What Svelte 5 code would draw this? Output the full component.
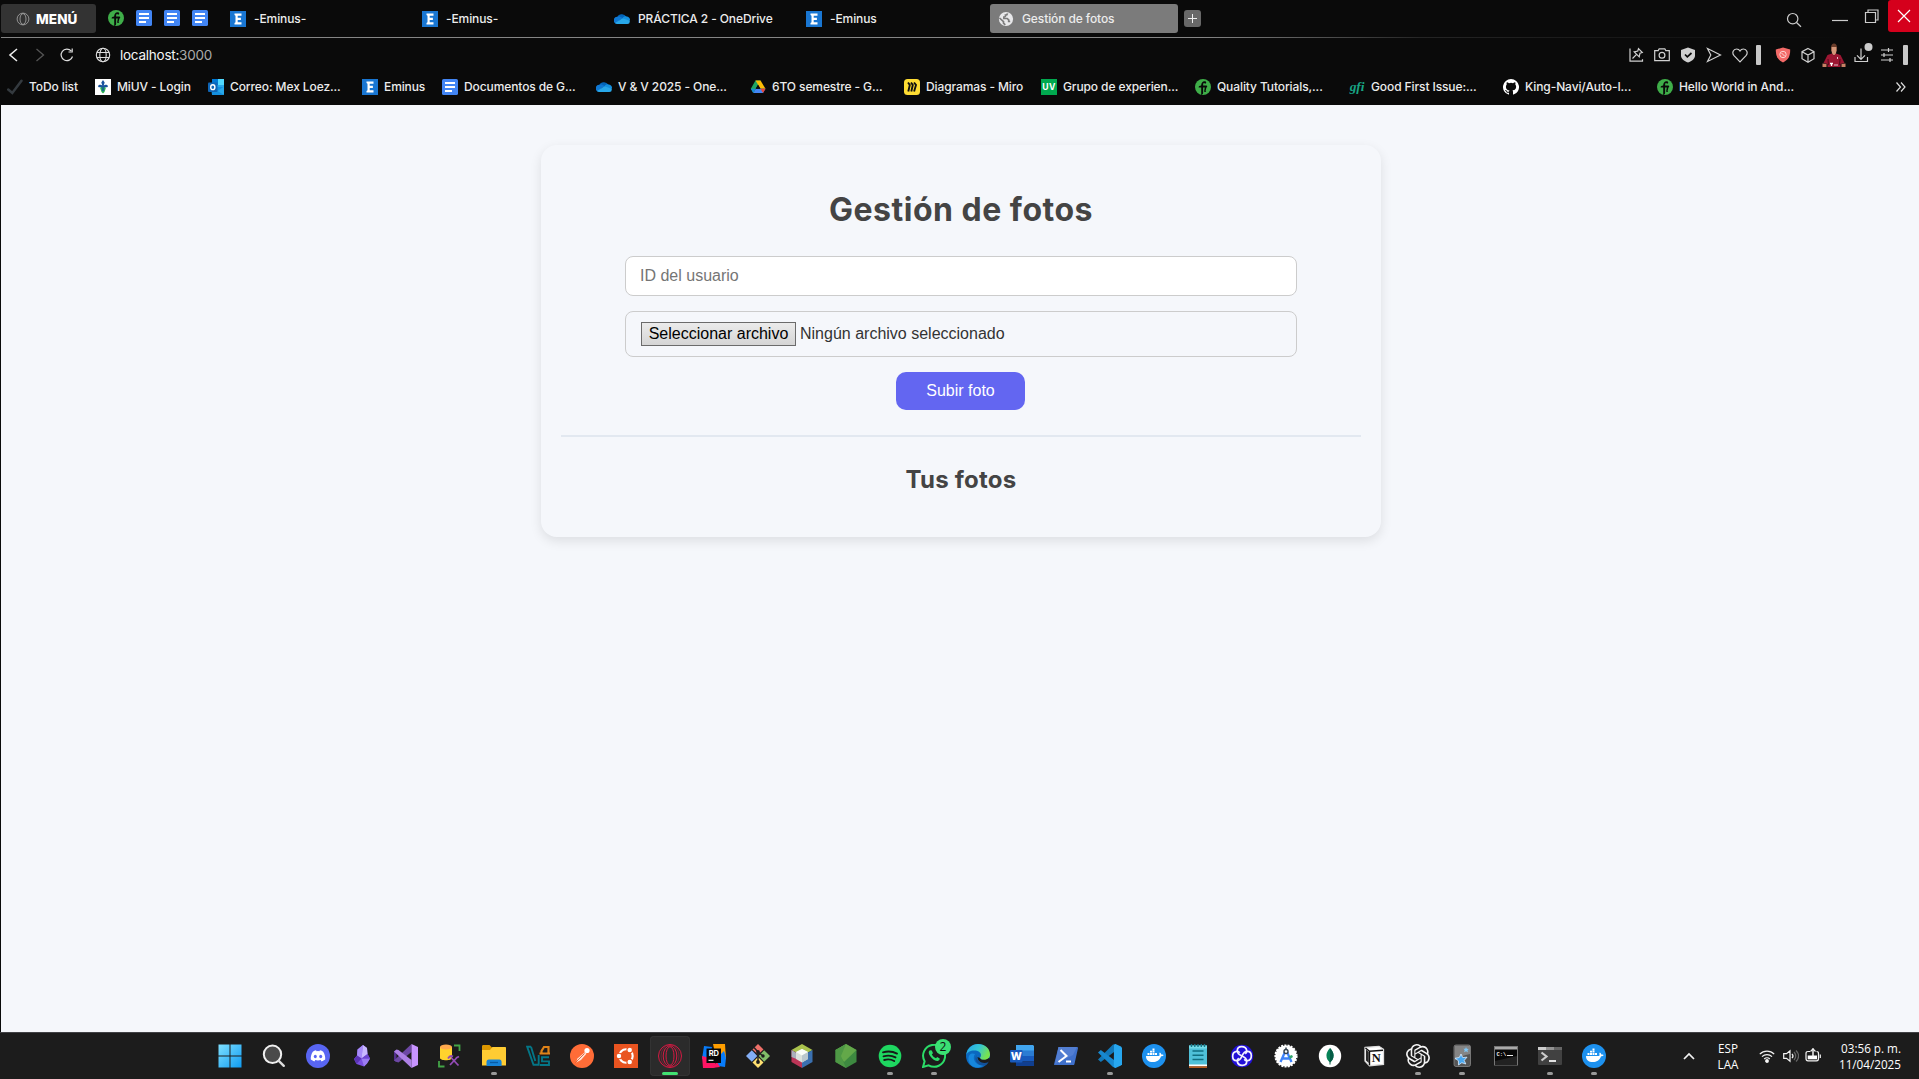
<script>
  const pinned = ['quality', 'docs', 'docs', 'docs'];
  const tabs = [
    { icon: 'eminus', title: '-Eminus-' },
    { icon: 'eminus', title: '-Eminus-' },
    { icon: 'onedrive', title: 'PRÁCTICA 2 - OneDrive' },
    { icon: 'eminus', title: '-Eminus' }
  ];
  const bookmarks = [
    { icon: 'check', title: 'ToDo list', width: 88 },
    { icon: 'miuv', title: 'MiUV - Login', width: 113 },
    { icon: 'outlook', title: 'Correo: Mex Loez...', width: 154 },
    { icon: 'eminus', title: 'Eminus', width: 80 },
    { icon: 'docs', title: 'Documentos de G...', width: 154 },
    { icon: 'onedrive', title: 'V & V 2025 - One...', width: 154 },
    { icon: 'drive', title: '6TO semestre - G...', width: 154 },
    { icon: 'miro', title: 'Diagramas - Miro', width: 137 },
    { icon: 'uv', title: 'Grupo de experien...', width: 154 },
    { icon: 'quality', title: 'Quality Tutorials,...', width: 154 },
    { icon: 'gfi', title: 'Good First Issue:...', width: 154 },
    { icon: 'github', title: 'King-Navi/Auto-I...', width: 154 },
    { icon: 'quality', title: 'Hello World in And...', width: 154 }
  ];
  const apps = [
    { icon: 'windows' }, { icon: 'search' }, { icon: 'discord' }, { icon: 'obsidian' },
    { icon: 'vs' }, { icon: 'dbtool' }, { icon: 'explorer', open: true }, { icon: 'virtualbox' },
    { icon: 'postman' }, { icon: 'ubuntu' }, { icon: 'opera', active: true }, { icon: 'rider' },
    { icon: 'git' }, { icon: 'netbeans' }, { icon: 'node' }, { icon: 'spotify', open: true },
    { icon: 'whatsapp', open: true, badge: '2' }, { icon: 'edge' }, { icon: 'word' },
    { icon: 'powershell' }, { icon: 'vscode', open: true }, { icon: 'docker' },
    { icon: 'notepad' }, { icon: 'swirl' }, { icon: 'android' }, { icon: 'mongo' },
    { icon: 'notion' }, { icon: 'openai', open: true }, { icon: 'anki', open: true },
    { icon: 'cmd' }, { icon: 'terminal', open: true }, { icon: 'docker', open: true }
  ];
</script>

{#snippet favicon(name)}
  <svg class="fav" viewBox="0 0 16 16">
    {#if name === 'quality'}
      <circle cx="8" cy="8" r="8" fill="#3fae49" />
      <path d="M6.200 16V8.500H3.600c.1-1.200 1-1.900 2.500-1.900C6.300 3.900 7.400 2.300 9.500 2.300c1 0 1.700.5 1.700 1.300 0 .7-.4 1.100-1 1.100-.7 0-.8-.6-1.300-.6-.6 0-.8 1-.8 2.500h2.700c.9 0 1.400.4 1.400 1 0 .5-.3.900-.8.900l-.8 3.500c-.1.400.1.500.6.400-.4.800-2.200 1-2-.5l.6-3.400H8.100V14c0 1-.7 1.800-1.900 2z" fill="#0a0a0a" />
    {:else if name === 'docs'}
      <rect width="16" height="16" rx="1.600" fill="#4285f4" />
      <path d="M3 4h10M3 8h10M3 12h7" stroke="#fff" stroke-width="1.800" />
    {:else if name === 'eminus'}
      <rect width="16" height="16" fill="#1976d2" />
      <path d="M4.500 2.500h7v2.200H7.700v2.100h3.200v2.300H7.700v2.200h3.800v2.200h-7v-1.600l1-.6V4.700l-1-.6z" fill="#fff" />
    {:else if name === 'onedrive'}
      <path d="M3 7.500A5 5 0 0 1 12.300 5.800L9 9z" fill="#0364b8" />
      <path d="M3.300 5.800c2-.7 3.800.2 5.200 1.200L2 12.600A3.500 3.500 0 0 1 3.300 5.800z" fill="#0f78d4" />
      <path d="M8.500 7c1-1.300 2.600-2 4-1.600A3.600 3.600 0 0 1 16 9.500L12 11z" fill="#1490df" />
      <path d="M1 12 8.500 7.200l7.200 2.600a2.800 2.800 0 0 1-2.300 3.300H3A3 3 0 0 1 1 12z" fill="#28a8ea" />
    {:else if name === 'check'}
      <path d="M1.200 10.500 5.300 14 14.500 1.800" fill="none" stroke="#343a3f" stroke-width="2.500" stroke-linecap="round" />
    {:else if name === 'miuv'}
      <rect width="16" height="16" fill="#fff" />
      <path d="M8 1 9.700 3.500 8.700 6.500c1-1.300 4.300-1 4.200.7-.1 1.200-1.600 1.500-2.100.7L9.500 9h-3L5.200 7.900c-.5.800-2 .5-2.100-.7C3 5.500 6.300 5.200 7.300 6.500l-1-3z" fill="#18529d" />
      <path d="M5 8.500h6L9.500 13 8 14.500 6.500 13z" fill="#28ad56" /><path d="M7.200 8.500h1.600V12H7.200z" fill="#18529d" />
    {:else if name === 'outlook'}
      <rect x="4" y="0" width="12" height="14" rx="1" fill="#28a8ea" />
      <path d="M4 0h6v6H4z" fill="#0078d4" /><path d="M10 0h6v6h-6z" fill="#50d9ff" />
      <path d="M3 8h13v7a1 1 0 0 1-1 1H4z" fill="#1490df" /><path d="m3 8 13 8V7.500L9.500 12z" fill="#28a8ea" />
      <rect x="0" y="3.500" width="9.500" height="9.500" rx="1" fill="#0f65b5" />
      <ellipse cx="4.800" cy="8.200" rx="2.100" ry="2.400" fill="none" stroke="#fff" stroke-width="1.400" />
    {:else if name === 'drive'}
      <path d="M5.500 1.500h5L8 6 3.300 14 .8 9.800z" fill="#1fa463" />
      <path d="M5.500 1.500h5l5 8.300h-5z" fill="#fbbc04" />
      <path d="M3.300 14 5.700 9.800h9.800L13 14z" fill="#4285f4" />
      <path d="M10.500 9.800h5L13 14z" fill="#ea4335" /><path d="m.8 9.800 2.500 4.200 2.400-4.200z" fill="#188ad6" />
      <path d="m8 5.800 2.300 4H5.700z" fill="#0a0a0a" />
    {:else if name === 'miro'}
      <rect width="16" height="16" rx="3.500" fill="#ffdd33" />
      <path d="M4 3.500 5.800 6 4.300 12.500M7 3.500 8.800 6 7.300 12.500M10 3.500 12 6l-1.900 6.500" fill="none" stroke="#111" stroke-width="1.900" />
    {:else if name === 'uv'}
      <rect width="16" height="16" fill="#00a94f" />
      <text x="8" y="10.600" text-anchor="middle" font-size="8.600" font-weight="700" letter-spacing=".3" fill="#fff">UV</text>
    {:else if name === 'gfi'}
      <text class="serif" x="8" y="12" text-anchor="middle" font-size="13.500" font-weight="700" font-style="italic" fill="#18a383">gfi</text>
    {:else if name === 'github'}
      <path d="M8 0a8 8 0 0 0-2.530 15.590c.4.070.55-.17.55-.38l-.01-1.490c-2.010.37-2.530-.49-2.690-.94-.09-.23-.48-.94-.82-1.130-.28-.15-.68-.52-.01-.53.63-.01 1.080.58 1.230.82.720 1.210 1.870.87 2.330.66.070-.52.280-.87.510-1.070-1.780-.2-3.640-.89-3.640-3.950 0-.87.310-1.590.82-2.150-.08-.2-.36-1.020.08-2.120 0 0 .67-.21 2.200.82a7.600 7.600 0 0 1 4 0c1.530-1.040 2.200-.82 2.200-.82.440 1.100.160 1.920.08 2.120.510.560.82 1.270.82 2.150 0 3.070-1.870 3.750-3.650 3.950.290.250.54.73.54 1.480l-.01 2.200c0 .21.150.46.55.38A8 8 0 0 0 8 0z" fill="#fff" />
    {/if}
  </svg>
{/snippet}

{#snippet app(name)}
  <svg class="appicon" viewBox="0 0 24 24">
    {#if name === 'windows'}
      <defs><linearGradient id="win" x1="0" y1="0" x2="1" y2="1"><stop stop-color="#7fe0ff" /><stop offset="1" stop-color="#0f9bf2" /></linearGradient></defs>
      <path d="M.5.5h11v11H.5zM12.500.5h11v11h-11zM.5 12.500h11v11H.5zM12.500 12.500h11v11h-11z" fill="url(#win)" />
    {:else if name === 'search'}
      <circle cx="10.500" cy="10.300" r="8.700" fill="#4a4a4a" stroke="#f0f0f0" stroke-width="2" />
      <path d="m16.800 16.800 5 5" stroke="#ddd" stroke-width="2.400" stroke-linecap="round" />
    {:else if name === 'discord'}
      <circle cx="12" cy="12" r="12" fill="#5865f2" />
      <path d="M6.800 7.700c1-.8 2-1.200 3.200-1.400l.6.900a12 12 0 0 1 2.800 0l.6-.9c1.200.2 2.300.6 3.200 1.400 1.500 2.400 2.200 5 2 7.900a9 9 0 0 1-3.600 1.800l-.9-1.400c-1.800.5-3.600.5-5.400 0l-.9 1.400a9 9 0 0 1-3.600-1.800c-.2-2.900.5-5.500 2-7.900z" fill="#fff" />
      <ellipse cx="9.300" cy="12.500" rx="1.500" ry="1.700" fill="#5865f2" /><ellipse cx="14.700" cy="12.500" rx="1.500" ry="1.700" fill="#5865f2" />
    {:else if name === 'obsidian'}
      <path d="m13 1-5.500 4.500-.5 6L4 15l2.500 5 7.500 2.500 3-3 3-5-2.500-4.500L17 4z" fill="#7a4fe0" />
      <path d="M13 1 7.500 5.500 7 11.500l4.500 3z" fill="#a78bfa" /><path d="m13 1 4 3 .5 6-6 4.500z" fill="#c9b8ff" />
      <path d="m11.500 14.500 8.500 0-3 5-3 3z" fill="#9b7cf2" /><path d="m7 11.500-3 3.500 2.500 5 5-5.500z" fill="#5b34b5" /><path d="m17.500 10 2.500 4.500h-8.500z" fill="#6d45cf" />
    {:else if name === 'vs'}
      <path d="M0 7.500 2.500 6v12L0 16.500z" fill="#52308c" />
      <path d="M17.500 0v8L4.500 18.500 2 17.800 0 16.500z" fill="#6d48a5" />
      <path d="m2.500 5.500 2 .5 13 10v8L0 7.500z" fill="#ad80e5" />
      <path d="m17.500 0 6.500 3v18l-6.500 3z" fill="#c894ff" />
    {:else if name === 'dbtool'}
      <path d="M2 3v11c0 3 12 3 12 0V3z" fill="#ffd32d" /><ellipse cx="8" cy="3" rx="6" ry="2.500" fill="#ffa94d" />
      <path d="M16 1.500h5.500V7M1 17v5.500h5.500" fill="none" stroke="#43a547" stroke-width="1.800" />
      <path d="m12 21 7-7.500M13 13.500l7.500 8M10 14.500q2-3.500 5-2M18 14l3-1.500" stroke="#944bb7" stroke-width="1.800" fill="none" />
    {:else if name === 'explorer'}
      <path d="M0 2.500C0 1.500.5 1 1.500 1h6L10 3.500h6V7H0z" fill="#dc9700" />
      <path d="M0 6h8l2.500-3H23c.6 0 1 .4 1 1v17.500H0z" fill="#ffcc33" />
      <path d="M4.500 22v-4c0-1.500.8-2.500 2.300-2.500h10.500c1.500 0 2.300 1 2.300 2.500v4z" fill="#1683d8" /><path d="M8 18.500h8" stroke="#075ba5" stroke-width="1.300" />
    {:else if name === 'virtualbox'}
      <path d="M5 2.800H1.200L7.500 20.800h5.200V11M5 2.800 9.300 17M23 13.200h-7v4.200h7v3.600h-9" fill="none" stroke="#047687" stroke-width="1.900" />
      <path d="M15.500 9V7L18 3h4.500v6" fill="none" stroke="#df8218" stroke-width="2.200" /><path d="M13.500 9.500H24" stroke="#df8218" stroke-width="2" />
    {:else if name === 'postman'}
      <circle cx="12" cy="12" r="12" fill="#ff6c37" /><circle cx="17" cy="6.500" r="2.600" fill="#fff" />
      <path d="m15 8-7.500 6.500L6 18.500l5-2.500 5.500-6.300z" fill="#ffe4d8" /><path d="m5.500 18.500 9-9" stroke="#d75020" stroke-width=".8" />
    {:else if name === 'ubuntu'}
      <rect width="24" height="24" fill="#e95420" />
      <circle cx="12" cy="12" r="6.700" fill="none" stroke="#fff" stroke-width="2.100" />
      <g fill="#fff" stroke="#e95420" stroke-width="1.100"><circle cx="5" cy="12" r="2.800" /><circle cx="15.700" cy="6" r="2.800" /><circle cx="15.700" cy="18" r="2.800" /></g>
    {:else if name === 'opera'}
      <g fill="none" stroke="#e81745" stroke-width=".9"><circle cx="12" cy="12" r="11.500" /><ellipse cx="12" cy="12" rx="6.800" ry="10.300" /><ellipse cx="12" cy="12" rx="4" ry="9.300" /><ellipse cx="12" cy="12" rx="9" ry="11.300" stroke-width=".35" /></g>
    {:else if name === 'rider'}
      <path d="m2 2 8 1-2 10-8 2z" fill="#087cfa" /><path d="M11 0h12l1 15-9 3z" fill="#ff9e00" />
      <path d="m0 12 8 2 8 8-5 2H1z" fill="#ff1464" /><path d="m22 7 2 7-1 9-7-1-2-7z" fill="#087cfa" /><path d="m15 18 3 5-8 1z" fill="#ff1464" /><rect x="4.500" y="4.500" width="14.500" height="14.500" fill="#080808" />
      <text x="11.800" y="12" font-size="7.500" font-weight="700" fill="#fff" text-anchor="middle">RD</text><path d="M6.500 16.300h5" stroke="#fff" stroke-width="1.100" />
    {:else if name === 'git'}
      <path d="m12 0 5.500 5.500-5.500 5-5.500-5z" fill="#ef7069" /><path d="m5.800 6.300 5.500 5.700-5.500 5.700L0 12z" fill="#83aef5" />
      <path d="m18.200 6.300 5.800 5.700-5.800 5.700-5.500-5.700z" fill="#81bd69" /><path d="m12 13 5.500 5.500L12 24l-5.500-5.500z" fill="#ffe071" />
      <path d="m8 3.500 4 4.500v11M12 8l5 4" stroke="#242424" stroke-width="1.500" fill="none" /><circle cx="12" cy="8" r="1.900" fill="#1c1c1c" /><circle cx="12" cy="18" r="1.900" fill="#1c1c1c" /><circle cx="17" cy="12" r="1.700" fill="#1c1c1c" />
    {:else if name === 'netbeans'}
      <path d="m12 0 10.500 6L12 12 1.500 6z" fill="#aac34d" /><path d="M1.500 6 12 12v12L1.500 18z" fill="#bb3557" /><path d="M22.500 6 12 12v12l10.500-6z" fill="#3a70b0" />
      <path d="m1.500 6 5 3v6l-5-2z" fill="#aab1bb" /><path d="m12 5 6 3v7l-6 3.500L6 15V8z" fill="#dce2dc" /><path d="m12 5 6 3-6 3.500L6 8z" fill="#fafdf8" /><path d="m12 11.500 6-3.500v7l-6 3.500z" fill="#bac7cd" />
    {:else if name === 'node'}
      <path d="m12 0 10.500 6v12L12 24 1.500 18V6z" fill="#3d8940" /><path d="m12 0 10.500 6L10 18 1.500 6z" fill="#63a849" /><path d="M12 0 7 12l5 12L1.500 18V6z" fill="#4e9845" />
    {:else if name === 'spotify'}
      <circle cx="12" cy="12" r="11.300" fill="#1ed760" /><path d="M5 8.300c5-1.500 10-.9 14 1.300M5.500 12.300c4.500-1.200 8.500-.8 12 1.100M6.200 16c3.500-1 7-.7 10 1" fill="none" stroke="#181818" stroke-width="1.900" stroke-linecap="round" />
    {:else if name === 'whatsapp'}
      <path d="m1 23 1.600-5.700a11 11 0 1 1 4 4z" fill="none" stroke="#2bdc68" stroke-width="2" />
      <path d="M8 6.300c-2 1.200-1.400 3.600.3 6 2 2.800 4.500 5 7.400 4.600 1.500-.3 2.200-1.300 2-2.400l-2.500-1.400-1.200 1.200c-2-.7-3.400-2.100-4.200-4L11 9.200 9.800 6.400z" fill="#2bdc68" />
    {:else if name === 'edge'}
      <defs><linearGradient id="edge-a" x1="0" y1="0" x2="1" y2=".4"><stop stop-color="#23a3ec" /><stop offset=".55" stop-color="#35c6d2" /><stop offset="1" stop-color="#77e34f" /></linearGradient></defs>
      <circle cx="12" cy="12" r="12" fill="#0b68bf" /><path d="M.2 11C1 4.500 6 0 12 0c7 0 12 4.500 12 10.500 0 3.500-2.500 5.500-5.500 5.500-3 0-4.500-1-4.500-2 0-.7 1-1 1-3C15 8.500 12 6.500 8.500 6.500 4 6.500 1 8.500.2 11z" fill="url(#edge-a)" />
      <path d="M9 10c-3.500 5 1 12 8 11.500-5 4-13 2-14.500-5C1.800 11 5 8 9 10z" fill="#1687dd" /><path d="M10.500 11c-1 4 3 8 7.500 7.500 2 0 4-.8 5-1.500-1 2-2 3.200-4 4.500-6.500 1-12-5-8.500-10.500z" fill="#135199" /><path d="M14 14c1 2.600 6.500 2.500 9.500-.5L24 16l-1.500 2c-5 2.500-11 0-11-5z" fill="#1c1c1c" />
    {:else if name === 'word'}
      <path d="M6 1h17l1 1v5H6z" fill="#41a5ee" /><path d="M6 6.500h18V12H6z" fill="#2b7cd3" /><path d="M6 12h18v5.500H6z" fill="#185abd" /><path d="M6 17.500h18V22H6z" fill="#103f91" />
      <rect y="6" width="12.500" height="12.500" rx="1" fill="#185abd" /><text x="6.200" y="16" text-anchor="middle" font-size="10.500" font-weight="800" fill="#fff">W</text>
    {:else if name === 'powershell'}
      <path d="M4.500 3H23c.8 0 1.200.6 1 1.200l-3.600 16c-.2.600-.7.900-1.300.9H.9c-.6 0-1-.4-.8-1z" fill="#3f70cb" /><path d="M4.500 3H23l-4 8-18 9z" fill="#527ed2" /><path d="m6.500 6 6 6-8 6M12 17.500h5" stroke="#fff" stroke-width="2" fill="none" />
    {:else if name === 'vscode'}
      <path d="m0 15.500 15-15L18 0v6.500L2.800 18z" fill="#1278b9" /><path d="M0 8.500 15 23l3 1v-6.500L2.800 6z" fill="#1788cf" /><path d="m17.500 0 5.500 2.500 1 1.200v16.600l-1 1.200-5.500 2.500-1.700-1 .2-22z" fill="#27a7ef" />
    {:else if name === 'docker'}
      <circle cx="12" cy="12" r="12" fill="#1d91ef" /><path d="M4 12h12c1 0 1.500-.4 1.700-1-.7-1-.4-2 .2-2.600 1 .5 1.300 1.200 1.300 2 1 0 1.700 0 2.400.5-.5 1-1.300 1.400-2.500 1.400C17.500 16.500 14.500 18 11 18c-4.500 0-7-2-7-6z" fill="#fff" />
      <path d="M5.500 9h2v2h-2zM8 9h2v2H8zM10.500 9h2v2h-2zM13 9h2v2h-2zM8 6.800h2v1.800H8zM10.500 6.800h2v1.800h-2zM10.500 4.600h2v1.800h-2z" fill="#fff" />
    {:else if name === 'notepad'}
      <path d="M3 1.500h18V21H3z" fill="#4fc0d8" /><path d="M3 1.500h18v3H3z" fill="#73dbe8" /><path d="M3 20.500h18v2H3z" fill="#fff" /><path d="M3 22.300h18V24H3z" fill="#b65b20" /><path d="M5.500 0v3m3.300-3v3M12 0v3m3.300-3v3m3.200-3v3" stroke="#167788" stroke-width="1.400" /><path d="M6.500 7h11m-11 4.300h11m-11 4.300h11" stroke="#116e80" stroke-width="1.500" />
    {:else if name === 'swirl'}
      <circle cx="12" cy="12" r="11.200" fill="#2210d8" />
      <g fill="none" stroke="#f1f1ff" stroke-width="1.700">
        {#each [0, 90, 180, 270] as a}
          <path transform="rotate({a} 12 12)" d="M12 12C9.500 11 7.300 8.500 7.300 6.500c0-5 8.500-5.200 9.400 0 .2 1.300-.4 2.500-1.500 3.200" />
        {/each}
      </g>
    {:else if name === 'android'}
      <circle cx="12" cy="12" r="10.600" fill="#fff" stroke="#fff" stroke-width="2" stroke-dasharray="2 1.200" /><path d="m11 8-4.500 10M13 8l4.500 10M7.500 14.500h9.500" fill="none" stroke="#3f82f8" stroke-width="2.300" /><path d="m15 12 3-1 1 2-3 2z" fill="#32a66b" /><circle cx="12" cy="7.500" r="2" fill="#fff" stroke="#35434f" stroke-width="1.400" /><path d="M12 3.500v2.500" stroke="#35434f" stroke-width="1.500" />
    {:else if name === 'mongo'}
      <circle cx="12" cy="12" r="11.200" fill="#fff" /><path d="M12 4c5 5 4.500 11 0 14.500C7.500 15 7 9 12 4z" fill="#078358" /><path d="M12 4c5 5 4.500 11 0 14.500z" fill="#055c46" /><path d="M12 16v4.500" stroke="#055c46" />
    {:else if name === 'notion'}
      <path d="M3 3.500 17 2.300 21.500 5.300V20.300L7.500 21.700 3 17z" fill="#fff" stroke="#ddd" stroke-width="1.300" /><path d="m3.500 4 4 3.300 13.500-1M7.500 7.300v14" stroke="#111" stroke-width="1.400" fill="none" /><path d="M4 5.500 6.800 8v11L4 16.500z" fill="#292929" /><text class="serif" x="14.200" y="18" text-anchor="middle" font-size="12.500" font-weight="700" fill="#111">N</text>
    {:else if name === 'openai'}
      <path fill="#f4f4f4" d="M22.2819 9.8211a5.9847 5.9847 0 0 0-.5157-4.9108 6.0462 6.0462 0 0 0-6.5098-2.9A6.0651 6.0651 0 0 0 4.9807 4.1818a5.9847 5.9847 0 0 0-3.9977 2.9 6.0462 6.0462 0 0 0 .7427 7.0966 5.98 5.98 0 0 0 .511 4.9107 6.051 6.051 0 0 0 6.5146 2.9001A5.9847 5.9847 0 0 0 13.2599 24a6.0557 6.0557 0 0 0 5.7718-4.2058 5.9894 5.9894 0 0 0 3.9977-2.9001 6.0557 6.0557 0 0 0-.7475-7.0729zm-9.022 12.6081a4.4755 4.4755 0 0 1-2.8764-1.0408l.1419-.0804 4.7783-2.7582a.7948.7948 0 0 0 .3927-.6813v-6.7369l2.02 1.1686a.071.071 0 0 1 .038.052v5.5826a4.504 4.504 0 0 1-4.4945 4.4944zm-9.6607-4.1254a4.4708 4.4708 0 0 1-.5346-3.0137l.142.0852 4.783 2.7582a.7712.7712 0 0 0 .7806 0l5.8428-3.3685v2.3324a.0804.0804 0 0 1-.0332.0615L9.74 19.9502a4.4992 4.4992 0 0 1-6.1408-1.6464zM2.3408 7.8956a4.485 4.485 0 0 1 2.3655-1.9728V11.6a.7664.7664 0 0 0 .3879.6765l5.8144 3.3543-2.0201 1.1685a.0757.0757 0 0 1-.071 0l-4.8303-2.7865A4.504 4.504 0 0 1 2.3408 7.872zm16.5963 3.8558L13.1038 8.364 15.1192 7.2a.0757.0757 0 0 1 .071 0l4.8303 2.7913a4.4944 4.4944 0 0 1-.6765 8.1042v-5.6772a.79.79 0 0 0-.407-.667zm2.0107-3.0231l-.142-.0852-4.7735-2.7818a.7759.7759 0 0 0-.7854 0L9.409 9.2297V6.8974a.0662.0662 0 0 1 .0284-.0615l4.8303-2.7866a4.4992 4.4992 0 0 1 6.6802 4.66zM8.3065 12.863l-2.02-1.1638a.0804.0804 0 0 1-.038-.0567V6.0742a4.4992 4.4992 0 0 1 7.3757-3.4537l-.142.0805L8.704 5.459a.7948.7948 0 0 0-.3927.6813zm1.0976-2.3654l2.602-1.4998 2.6069 1.4998v2.9994l-2.5974 1.4997-2.6067-1.4997Z" />
    {:else if name === 'anki'}
      <rect x="4" y="1" width="16.500" height="21.500" rx="2" fill="#555" stroke="#888" stroke-width=".8" /><path d="M5 2h15v8C14 11 10 13 5 16z" fill="#858585" /><path d="m11 10 1.700 3.500 4.300-.3-2.800 3.200 1.600 3.600-4-1.300-3.300 2.300-.1-4.300L5 14.300l4.300-.8z" fill="#49a7ef" stroke="#dceeff" stroke-width=".8" /><path d="m16 3 .8 1.700 2 .2-1.400 1.400.6 2-2-1-1.900.9.600-2-1.200-1.500h1.800z" fill="#80c8f7" />
    {:else if name === 'cmd'}
      <rect x=".5" y="2.500" width="23" height="18.500" fill="#080808" stroke="#777" /><path d="M1 3h22v2.500H1z" fill="#aaa" /><text class="mono" x="2.500" y="11.500" font-size="5.500" font-weight="700" fill="#eee">C:\</text><path d="M13 11.500h6" stroke="#eee" /><path d="m1 17 22-5v9H1z" fill="#222" />
    {:else if name === 'terminal'}
      <rect y="3" width="24" height="18" rx="1" fill="#414141" /><path d="M0 3h8v3H0z" fill="#ccc" /><path d="M8 3h8v3H8z" fill="#929292" /><path d="M16 3h8v3h-8z" fill="#666" /><path d="m3.500 8.500 5 4-5 4" fill="none" stroke="#ccc" stroke-width="2.200" /><path d="M11 17h7" stroke="#fff" stroke-width="1.700" />
    {/if}
  </svg>
{/snippet}

<div class="screen">
  <header class="browser">
    <div class="tabbar">
      <button class="menu">
        <svg viewBox="0 0 14 14"><circle cx="7" cy="7" r="5.900" /><ellipse cx="7" cy="7" rx="3" ry="5.400" /></svg>
        <span>MENÚ</span>
      </button>
      <div class="pins">
        {#each pinned as p}{@render favicon(p)}{/each}
      </div>
      {#each tabs as t}
        <div class="tab">{@render favicon(t.icon)}<span>{t.title}</span></div>
      {/each}
      <div class="tab active">
        <svg class="fav" viewBox="0 0 16 16"><circle cx="8" cy="8" r="7.100" fill="#e8e8ea" /><path d="M9.500 2.300c-.2 1.400-.9 1.800-2 1.800.2 1.200-.5 1.800-1.600 1.900v1.500h3.300l1.500 1.400v1.600h1.500M1.500 7l4 3.700v1.500l1.800 1.700" fill="none" stroke="#7b7b7b" stroke-width="1.700" /></svg>
        <span>Gestión de fotos</span>
      </div>
      <button class="newtab" aria-label="Nueva pestaña"><svg viewBox="0 0 17 17"><path d="M8.500 4v9M4 8.500h9" /></svg></button>
      <div class="window">
        <svg class="find" viewBox="0 0 16 16"><circle cx="6.700" cy="6.700" r="5.200" /><path d="m10.500 10.500 4.500 4.300" /></svg>
        <svg class="min" viewBox="0 0 16 16"><path d="M0 8.500h16" /></svg>
        <svg class="restore" viewBox="0 0 16 16"><path d="M1.500 4.500h10v10h-10zM4 4V2h10v10h-2.500" /></svg>
        <button class="close" aria-label="Cerrar"><svg viewBox="0 0 16 16"><path d="m2 2 12 12M14 2 2 14" /></svg></button>
      </div>
    </div>
    <div class="line"></div>

    <div class="address">
      <div class="nav">
        <svg viewBox="0 0 16 16"><path d="M12 2 5 8l7 6" stroke="#eee" stroke-width="1.600" /></svg>
        <svg viewBox="0 0 16 16"><path d="m4.500 2 7 6-7 6" stroke="#555" stroke-width="1.300" /></svg>
        <svg viewBox="0 0 16 16"><path d="M13.500 9.500a5.800 5.800 0 1 1-1.300-5.600M13.200 1.500v3.500H9.500" stroke="#ddd" stroke-width="1.200" /></svg>
        <svg class="globe" viewBox="0 0 16 16"><g stroke="#ddd" stroke-width="1.100"><circle cx="8" cy="8" r="6.700" /><ellipse cx="8" cy="8" rx="3.200" ry="6.700" /><path d="M2 5.500h12M2 10.500h12" /></g></svg>
      </div>
      <div class="url">localhost:<span>3000</span></div>
      <div class="tools">
        <svg viewBox="0 0 16 16"><path d="M2 1.500v12.700h12.500v-2M10.500 1.700l3.800 3.800-2.300.7-.8 3.600-5-5 3.600-.8zM8.300 7.700 4.500 11.500" /></svg>
        <svg viewBox="0 0 16 16"><path d="M.7 3.600h3.500l1-1.800h5.600l1 1.800h3.500v10H.7z" /><circle cx="8" cy="8.300" r="2.900" /></svg>
        <svg viewBox="0 0 16 16"><path d="m8 .5 7 2.500v5.500c0 3.500-3 5.500-7 7-4-1.500-7-3.500-7-7V3z" fill="#d0d0d0" stroke="none" /><path d="m5 7.500 2.300 2.300L11.500 6" stroke="#0a0a0a" stroke-width="1.700" /></svg>
        <svg viewBox="0 0 16 16"><path d="m1.500 1.500 13 6.500-13 6.500L4.800 8z" /></svg>
        <svg class="heart" viewBox="0 0 16 16"><path d="M8 14.800 2 8.700C-.5 5.500 1.500 2 4.500 2 6 2 7.300 2.700 8 4c.7-1.300 2-2 3.500-2 3 0 5 3.500 2.500 6.700z" /></svg>
        <i></i>
        <svg class="shield" viewBox="0 0 16 16"><path d="m8 .5 7.200 2c0 6-1.300 10-7.200 13C2.100 12.500.8 8.500.8 2.500z" fill="#f36a68" stroke="none" /><circle cx="8" cy="7.500" r="3.200" stroke="#ffd4d1" stroke-width="1" /><path d="m6.500 6 3 3" stroke="#ffd4d1" stroke-width="1" /></svg>
        <svg class="cube" viewBox="0 0 16 16"><path d="m8 1.500 6 3.200v7L8 15.200l-6-3.500v-7zM2 4.700 8 8l6-3.300M8 8v7" /></svg>
        <svg class="avatar" viewBox="0 0 24 24"><path d="M9 4.500c0-5.500 6-5.500 6 0V8H9z" fill="#6b3d2a" /><path d="M9.600 4h4.800v4.500L13.500 12h-3L9.600 8.500z" fill="#d49779" /><path d="m10 10.500-4.500 1.500L1.500 20l4 1v3h13v-3l4-1-4-8-4.500-1.500-2 2z" fill="#9c1632" /><path d="m6 16 .5 6M18 16l-.5 6" stroke="#5d0a1e" /><path d="m.5 20.500 4 .5v3h-4zM19.500 21l4-.5v3.500h-4z" fill="#c98065" /><path d="M8 20.500h3m-1.500 0V23M12.500 22h1m1 0h1M15 15h1" stroke="#fff" stroke-width="1.300" /></svg>
        <svg class="download" viewBox="0 0 16 24"><path d="M8 5.500v10.500M4 12.300l4 4 4-4M2 14v4.500h12.500V14" /><circle cx="15.500" cy="4" r="4" fill="#ccc" stroke="none" /></svg>
        <svg class="sliders" viewBox="0 0 16 16"><path d="M2 3h12M2 8h12M2 13h12M9.500 1v4M5 6v4M11 11v4" /></svg>
        <i></i>
      </div>
    </div>

    <nav class="bookmarks">
      {#each bookmarks as b}
        <div class="bookmark" style:width="{b.width}px">{@render favicon(b.icon)}<span>{b.title}</span></div>
      {/each}
      <svg class="more" viewBox="0 0 12 12"><path d="m1.500 1.500 4 4.500-4 4.500M6 1.500l4 4.500-4 4.500" /></svg>
    </nav>
  </header>

  <main>
    <section class="card">
      <h1>Gestión de fotos</h1>
      <form>
        <input type="text" placeholder="ID del usuario" />
        <div class="file"><span class="pick">Seleccionar archivo</span><span>Ningún archivo seleccionado</span></div>
        <button type="button" class="submit">Subir foto</button>
      </form>
      <hr />
      <h2>Tus fotos</h2>
    </section>
  </main>

  <footer class="taskbar">
    <div class="apps">
      {#each apps as a}
        <div class="slot" class:current={a.active} class:open={a.open}>
          {@render app(a.icon)}
          {#if a.badge}<b>{a.badge}</b>{/if}
        </div>
      {/each}
    </div>
    <div class="tray">
      <svg class="up" viewBox="0 0 16 16"><path d="m3 11 5-5 5 5" /></svg>
      <div class="lang"><span>ESP</span><span>LAA</span></div>
      <svg viewBox="0 0 16 16"><path d="M.8 6.200a10.200 10.200 0 0 1 14.400 0M3 8.700a7 7 0 0 1 10 0M5.200 11a4 4 0 0 1 5.600 0" /><circle cx="8" cy="13" r="1.300" fill="#fff" /></svg>
      <svg class="sound" viewBox="0 0 16 16"><path d="M.7 5.700h2.800L7 2.700v10.600l-3.500-3H.7zM9 5.800c1.200 1.300 1.200 3.100 0 4.400" /><path d="M11 4c2.200 2.500 2.200 5.500 0 8M13 2.500c3.300 3.500 3.300 7.500 0 11" stroke="#666" /></svg>
      <svg viewBox="0 0 16 16"><path d="M5 3.500H3Q1 3.500 1 5.500v5Q1 12.800 3 12.800h8.500q2 0 2-2.300v-5q0-2-2-2M15.300 6.500v3.500" /><path d="M2.700 7.500h9.300v3.800H2.700z" fill="#fff" stroke="none" /><path d="M8 .5v8.500" stroke-width="1.500" /><path d="M5.500 3.500 8 .9l2.500 2.600" /></svg>
      <div class="clock"><span>03:56 p. m.</span><span>11/04/2025</span></div>
    </div>
  </footer>
</div>

<style>
  :global(body) { margin: 0; overflow: hidden; background: #0a0a0a; }
  .screen { display: flex; flex-direction: column; width: 1919px; height: 1079px; overflow: hidden; font-family: Inter, sans-serif; }
  button { border: 0; margin: 0; padding: 0; font: inherit; }
  svg { display: block; flex: none; fill: none; }
  svg text { font-family: Inter, sans-serif; }
  svg text.serif { font-family: 'Liberation Serif', serif; }
  svg text.mono { font-family: 'Liberation Mono', monospace; }
  .fav { width: 16px; height: 16px; }

  .browser { height: 105px; flex: none; padding-left: 1px; background: #0a0a0a; color: #ececec; font-size: 12px; font-weight: 500; letter-spacing: -.1px; box-sizing: border-box; }
  .tabbar { display: flex; height: 37px; align-items: flex-start; }
  .menu { display: flex; align-items: center; gap: 6px; width: 95px; height: 29px; margin-top: 4px; padding-left: 15px; box-sizing: border-box; border-radius: 3px; background: #333; color: #fff; font-size: 13.500px; font-weight: 800; letter-spacing: .1px; }
  .menu svg { width: 14px; height: 14px; stroke: #aaa; stroke-width: .8; }
  .pins { display: flex; gap: 12px; padding: 6px 14px 0 12px; margin-top: 4px; }
  .tab { display: flex; align-items: center; gap: 8px; width: 192px; height: 29px; margin-top: 4px; padding-left: 8px; box-sizing: border-box; white-space: nowrap; }
  .tab.active { width: 188px; border-radius: 3px; background: #7b7b7b; margin-right: 6px; }
  .newtab { width: 17px; height: 17px; margin-top: 10px; border-radius: 3px; background: #686868; }
  .newtab svg { width: 17px; height: 17px; stroke: #eee; stroke-width: 1; }
  .window { display: flex; margin-left: auto; }
  .window svg { width: 16px; height: 16px; stroke: #ccc; stroke-width: 1.200; }
  .window .find { margin: 12px 30px 0 0; }
  .window .min { margin: 12px 16px 0 0; }
  .window .restore { margin: 8px 8px 0 0; }
  .close { display: flex; align-items: center; justify-content: center; width: 31px; height: 32px; border-radius: 3px 0 0 3px; background: #d5001c; }
  .close svg { stroke: #fff; }
  .line { height: 1px; background: linear-gradient(90deg, #858585 0, #858585 1200px, #252525 1420px, #191919 1600px, #0a0a0a 1850px); }

  .address { display: flex; align-items: center; height: 34px; }
  .nav { display: flex; gap: 11px; padding-left: 4px; }
  .nav svg { width: 16px; height: 16px; }
  .nav .globe { margin-left: 9px; }
  .url { margin-left: 9px; font-size: 13.500px; font-weight: 400; letter-spacing: -.25px; color: #f4f4f4; }
  .url span { color: #aaa; }
  .tools { display: flex; align-items: center; margin-left: auto; padding-right: 11px; }
  .tools svg { width: 16px; height: 16px; margin-right: 10px; stroke: #d0d0d0; stroke-width: 1.200; }
  .tools i { width: 5px; height: 20px; border-radius: 1px; background: #c8c8c8; }
  .tools .heart { margin-right: 8px; }
  .tools .shield { margin-left: 14px; margin-right: 9px; }
  .tools .cube { margin-right: 6px; }
  .tools .avatar { width: 24px; height: 24px; margin-right: 7px; stroke: none; }
  .tools .download { height: 24px; overflow: visible; }
  .tools .sliders { margin-right: 8px; }

  .bookmarks { display: flex; align-items: center; height: 30px; padding-left: 6px; }
  .bookmark { display: flex; align-items: center; gap: 6px; flex: none; white-space: nowrap; }
  .bookmark span { margin-bottom: 1px; }
  .more { width: 12px; height: 12px; margin-left: 84px; stroke: #ddd; stroke-width: 1.200; }

  main { flex: 1; padding: 40px 0 0 2px; border-left: 1px solid #0a0a0a; background: #f5f7fb; }
  .card { width: 840px; height: 392px; margin: 0 auto; padding: 0 20px; box-sizing: border-box; border-radius: 16px; box-shadow: 0 4px 12px rgba(0, 0, 0, .1); color: #444; }
  h1, h2 { margin: 0; font-weight: 700; text-align: center; }
  h1 { padding-top: 41px; height: 111px; box-sizing: border-box; font-size: 32px; line-height: 48px; letter-spacing: .5px; }
  form { display: flex; flex-direction: column; align-items: center; gap: 15px; font: 16px 'Liberation Sans', Arial, sans-serif; }
  input, .file { width: 672px; box-sizing: border-box; padding: 0 15px; border: 1px solid #ccc; border-radius: 8px; font: inherit; }
  input { height: 40px; padding-left: 14px; background: #fff; }
  input::placeholder { color: #757575; }
  .file { display: flex; align-items: center; height: 46px; gap: 4px; color: #333; }
  .pick { width: 155px; height: 24px; box-sizing: border-box; border: 1px solid #6b6b6b; background: linear-gradient(#ebebeb, #d5d5d5); color: #000; line-height: 22px; text-align: center; }
  .submit { width: 129px; height: 38px; margin-right: 1px; border-radius: 10px; background: #6366f1; color: #fff; }
  hr { height: 2px; margin: 25px 0 0; border: 0; background: #e2e8f0; }
  h2 { margin-top: 25px; font-size: 24px; line-height: 36px; letter-spacing: .25px; }

  .taskbar { display: flex; flex: none; height: 47px; box-sizing: border-box; border-top: 1px solid #414145; background: #1c1c1c; color: #fff; }
  .apps { display: flex; padding-left: 210px; gap: 4px; }
  .slot { position: relative; display: flex; align-items: center; justify-content: center; width: 40px; height: 40px; margin-top: 3px; border-radius: 4px; }
  .appicon { width: 24px; height: 24px; }
  .current { background: #2b2b2b; box-shadow: inset 0 0 0 1px #333; }
  .open::after, .current::after { content: ''; position: absolute; left: 17px; bottom: 1px; width: 6px; height: 3px; border-radius: 2px; background: #999; }
  .current::after { left: 12px; width: 16px; background: #41e272; }
  .slot b { position: absolute; top: 3px; right: 3px; width: 16px; height: 16px; border-radius: 8px; background: #3be073; color: #111; font: 12px/16px 'Open Sans', sans-serif; text-align: center; }
  .tray { display: flex; align-items: center; margin-left: auto; padding-right: 18px; font: 11.700px/16px 'Open Sans', sans-serif; }
  .tray svg { width: 16px; height: 16px; margin-right: 8px; stroke: #f2f2f2; stroke-width: 1.200; }
  .tray .sound { margin-right: 6px; }
  .tray .up { margin-right: 20px; stroke-width: 1.700; }
  .lang, .clock { display: flex; flex-direction: column; }
  .lang { width: 22px; margin-right: 20px; align-items: center; }
  .clock { width: 72px; align-items: flex-end; white-space: nowrap; }
</style>
